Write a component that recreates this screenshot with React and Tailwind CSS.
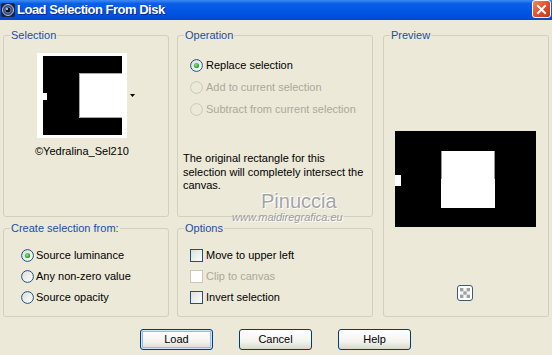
import React from "react";

function Radio({ checked, disabled }) {
  return (
    <svg width="13" height="13" viewBox="0 0 13 13" className="shrink-0">
      <defs>
        <linearGradient id="rg" x1="0" y1="0" x2="1" y2="1">
          <stop offset="0" stopColor="#DCDCD7" />
          <stop offset="1" stopColor="#FFFFFF" />
        </linearGradient>
        <radialGradient id="dot" cx="0.4" cy="0.4" r="0.6">
          <stop offset="0" stopColor="#8FE08F" />
          <stop offset="1" stopColor="#21A121" />
        </radialGradient>
      </defs>
      <circle
        cx="6.5"
        cy="6.5"
        r="5.9"
        fill={disabled ? "#ECE9D8" : "url(#rg)"}
        stroke={disabled ? "#CAC8BB" : "#1C5180"}
        strokeWidth="1"
      />
      {checked && <circle cx="6.5" cy="6.5" r="2.6" fill="url(#dot)" />}
    </svg>
  );
}

function Check({ disabled }) {
  return (
    <svg width="13" height="13" viewBox="0 0 13 13" className="shrink-0">
      <defs>
        <linearGradient id="cg" x1="0" y1="0" x2="1" y2="1">
          <stop offset="0" stopColor="#DCDCD7" />
          <stop offset="1" stopColor="#FFFFFF" />
        </linearGradient>
      </defs>
      <rect
        x="0.5"
        y="0.5"
        width="12"
        height="12"
        fill={disabled ? "#FFFFFF" : "url(#cg)"}
        stroke={disabled ? "#CAC8BB" : "#1C5180"}
      />
    </svg>
  );
}

function Group({ title, className = "", children }) {
  return (
    <fieldset
      className={`m-0 min-w-0 p-0 border border-[#D0D0BF] rounded-[3px] ${className}`}
    >
      <legend className="ml-[6px] px-[1px] leading-[13px] text-[#1A4DA6]">
        {title}
      </legend>
      {children}
    </fieldset>
  );
}

function Btn({ children, def }) {
  return (
    <button
      className={`w-[73px] h-[21px] rounded-[3px] border border-[#003C74] bg-[linear-gradient(180deg,#FFFFFF_0%,#F4F3EE_60%,#DCD8CC_100%)] leading-[19px] text-[11px] text-black ${
        def ? "shadow-[inset_0_0_0_1px_#CEE7FF,inset_0_0_0_2px_#98B8EA]" : ""
      }`}
    >
      {children}
    </button>
  );
}

export default function App() {
  return (
    <div className="relative w-[552px] h-[355px] overflow-hidden bg-[#ECE9D8] font-['Liberation_Sans',Arial,sans-serif] text-[11px] text-black">
      {/* Title bar */}
      <div className="flex h-[20px] items-center bg-[linear-gradient(180deg,#3D8BF5_0%,#0A5FE6_18%,#0055E5_60%,#0049D0_100%)] pl-[1px]">
        <svg width="14" height="14" viewBox="0 0 14 14" className="shrink-0">
          <rect x="0" y="0" width="14" height="14" rx="2" fill="#1B2340" />
          <circle cx="7" cy="7" r="5.5" fill="#3A4C7A" stroke="#AFC0E0" strokeWidth="1" />
          <circle cx="7" cy="7" r="3" fill="#101828" stroke="#7D90BA" strokeWidth="0.8" />
          <circle cx="6" cy="6" r="1" fill="#DDE6F8" />
        </svg>
        <span className="ml-[2px] text-[13px] font-bold tracking-[-0.5px] text-white [text-shadow:1px_1px_0_#0A2A8A]">
          Load Selection From Disk
        </span>
        <div className="ml-auto mr-[1px] flex h-[18px] w-[19px] items-center justify-center self-start rounded-[3px] border border-white bg-[linear-gradient(135deg,#F08A6A_0%,#E0502A_50%,#C23A14_100%)]">
          <svg width="11" height="11" viewBox="0 0 11 11">
            <path d="M2 2 L9 9 M9 2 L2 9" stroke="white" strokeWidth="2" strokeLinecap="square" />
          </svg>
        </div>
      </div>

      {/* Groups */}
      <div className="grid grid-cols-[166px_196px_168px] grid-rows-[188px_95px] gap-x-[8px] gap-y-[5px] pl-[3px] pt-[9px]">
        <Group title="Selection">
          <div className="flex flex-col items-start pl-[33px] pt-[11px]">
            <div className="flex items-center gap-[3px]">
              <svg width="90" height="85" viewBox="0 0 90 85">
                <rect x="0" y="0" width="90" height="85" fill="#FFFFFF" />
                <rect x="6" y="3" width="79" height="79" fill="#000000" />
                <rect x="42" y="20" width="43" height="45" fill="#FFFFFF" />
                <path d="M42.5 20 V64.5 H85 M42 20.5 H85" stroke="#A8A8A8" strokeWidth="1" fill="none" />
                <rect x="6" y="40" width="4" height="7" fill="#FFFFFF" />
              </svg>
              <svg width="6" height="4" viewBox="0 0 6 4">
                <path d="M0 0 H5 L2.5 3 Z" fill="#000" />
              </svg>
            </div>
            <div className="ml-[-2px] mt-[7px] leading-[13px]">©Yedralina_Sel210</div>
          </div>
        </Group>

        <Group title="Operation">
          <div className="flex flex-col pl-[12px] pt-[12px]">
            <div className="flex h-[22px] items-center gap-[3px]">
              <Radio checked />
              <span>Replace selection</span>
            </div>
            <div className="flex h-[22px] items-center gap-[3px] text-[#ACA899]">
              <Radio disabled />
              <span>Add to current selection</span>
            </div>
            <div className="flex h-[22px] items-center gap-[3px] text-[#ACA899]">
              <Radio disabled />
              <span>Subtract from current selection</span>
            </div>
            <div className="ml-[-7px] mt-[32px] leading-[13.5px]">
              The original rectangle for this
              <br />
              selection will completely intersect the
              <br />
              canvas.
            </div>
          </div>
        </Group>

        <Group title="Preview" className="row-span-2 ml-[2px] w-[166px]">
          <div className="flex flex-col items-center pt-[89px]">
            <svg width="141" height="96" viewBox="0 0 141 96" className="ml-[-2px]">
              <rect x="0" y="0" width="141" height="96" fill="#000" />
              <rect x="46" y="20" width="54" height="57" fill="#FFF" />
              <path d="M46.5 20 V48 M99.5 20 V48" stroke="#9A9A9A" strokeWidth="1" />
              <rect x="0" y="44" width="6" height="11" fill="#FFF" />
            </svg>
            <div className="mt-[58px] ml-[-2px] flex h-[16px] w-[16px] items-center justify-center rounded-[3px] border border-[#3C5A78] bg-white">
              <svg width="10" height="10" viewBox="0 0 10 10">
                <rect x="0" y="0" width="10" height="10" fill="#F4F4F4" />
                <rect x="0" y="0" width="3.33" height="3.33" fill="#A0A0A0" />
                <rect x="6.67" y="0" width="3.33" height="3.33" fill="#A0A0A0" />
                <rect x="3.33" y="3.33" width="3.33" height="3.33" fill="#A0A0A0" />
                <rect x="0" y="6.67" width="3.33" height="3.33" fill="#A0A0A0" />
                <rect x="6.67" y="6.67" width="3.33" height="3.33" fill="#A0A0A0" />
              </svg>
            </div>
          </div>
        </Group>

        <Group title="Create selection from:">
          <div className="flex flex-col pl-[17px] pt-[10px]">
            <div className="flex h-[21px] items-center gap-[2px]">
              <Radio checked />
              <span>Source luminance</span>
            </div>
            <div className="flex h-[21px] items-center gap-[2px]">
              <Radio />
              <span>Any non-zero value</span>
            </div>
            <div className="flex h-[21px] items-center gap-[2px]">
              <Radio />
              <span>Source opacity</span>
            </div>
          </div>
        </Group>

        <Group title="Options">
          <div className="flex flex-col pl-[12px] pt-[10px]">
            <div className="flex h-[21px] items-center gap-[3px]">
              <Check />
              <span>Move to upper left</span>
            </div>
            <div className="flex h-[21px] items-center gap-[3px] text-[#ACA899]">
              <Check disabled />
              <span>Clip to canvas</span>
            </div>
            <div className="flex h-[21px] items-center gap-[3px]">
              <Check />
              <span>Invert selection</span>
            </div>
          </div>
        </Group>
      </div>

      {/* Buttons */}
      <div className="mt-[12px] flex gap-[26px] pl-[140px]">
        <Btn def>Load</Btn>
        <Btn>Cancel</Btn>
        <Btn>Help</Btn>
      </div>

      {/* Watermark overlay */}
      <div className="pointer-events-none absolute left-[261px] top-[189px] text-[20px] leading-[24px] text-[#A4A4A4] [text-shadow:1px_1px_0_#FFFFFF,-1px_-1px_0_#FFFFFF]">
        Pinuccia
      </div>
      <div className="pointer-events-none absolute left-[232px] top-[211px] text-[11px] italic leading-[13px] text-[#9C9C9C] [text-shadow:1px_1px_0_#FFFFFF]">
        www.maidiregrafica.eu
      </div>
    </div>
  );
}
